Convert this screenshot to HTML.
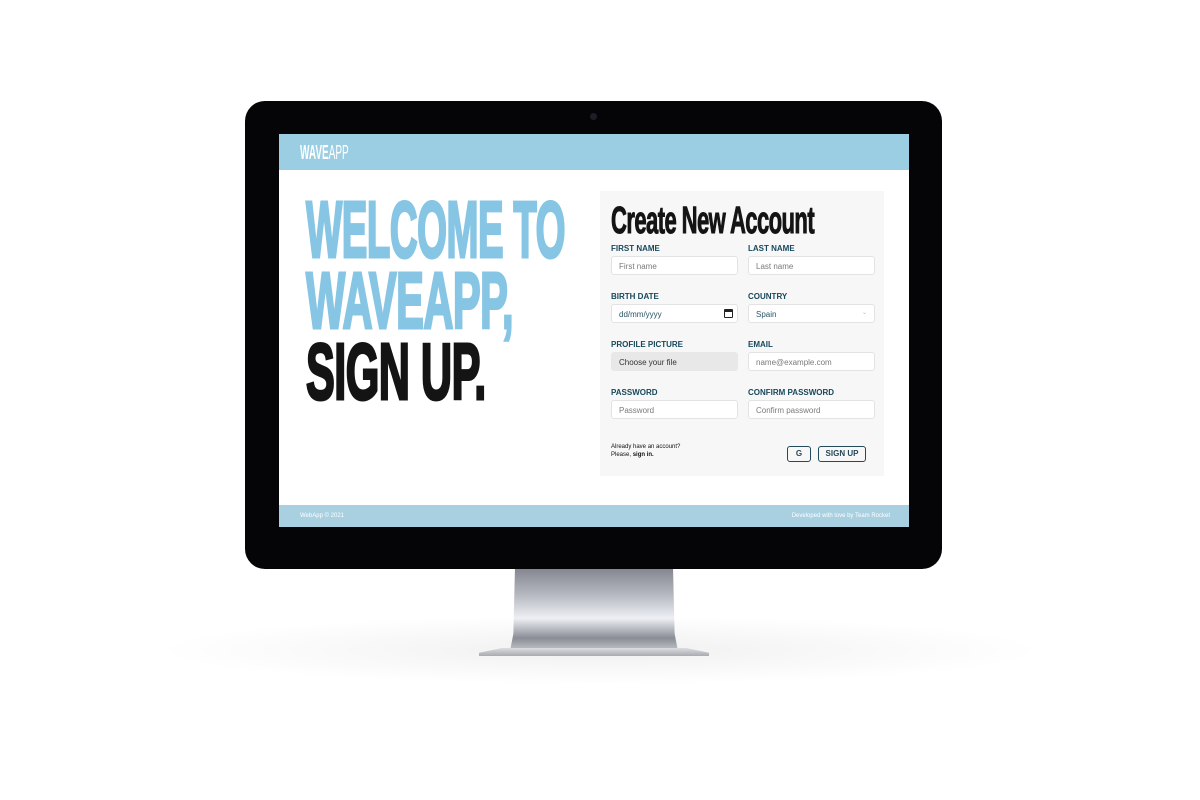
<!DOCTYPE html>
<html><head><meta charset="utf-8"><style>
*{margin:0;padding:0;box-sizing:border-box}
body{width:1200px;height:800px;background:#fff;position:relative;overflow:hidden;font-family:"Liberation Sans",sans-serif}
.abs{position:absolute}
.shadow{left:150px;top:615px;width:900px;height:70px;border-radius:50%;background:radial-gradient(ellipse at center,rgba(0,0,0,.06),rgba(0,0,0,0) 70%)}
.stand{left:510px;top:565px;width:168px;height:86px;background:linear-gradient(#7d8089 0%,#b6b9c1 35%,#eef0f5 62%,#8a8d96 85%,#c4c6cc 100%);clip-path:polygon(3% 0,97% 0,98% 80%,100% 100%,0 100%,2% 80%)}
.base{left:479px;top:648px;width:230px;height:8px;background:linear-gradient(#dcdde0,#a9abb0);clip-path:polygon(10% 0,90% 0,100% 60%,100% 100%,0 100%,0 60%)}
.bezel{left:245px;top:101px;width:697px;height:468px;background:#050507;border-radius:20px}
.cam{left:590px;top:113px;width:7px;height:7px;border-radius:50%;background:#1c1f2a}
.screen{left:279px;top:134px;width:630px;height:393px;background:#fff;overflow:hidden}
.hdr{left:0;top:0;width:630px;height:36px;background:#9bcde3}
.ftr{left:0;top:371px;width:630px;height:22px;background:#a8d0e0;color:#fff;font-size:6px}
.big{font-weight:bold;font-size:80px;line-height:1;transform-origin:0 0;white-space:nowrap;letter-spacing:-1px;-webkit-text-stroke:3px currentColor}
.panel{left:321px;top:57px;width:284px;height:285px;background:#f7f7f7}
.lbl{font-size:8px;font-weight:bold;color:#17485c}
.inp{width:127px;height:19px;background:#fff;border:1px solid #e3e3e3;border-radius:3px;font-size:8px;color:#7a7a7a;padding:5px 7px}
.btn{border:1px solid #23495a;border-radius:3px;font-size:8px;font-weight:bold;color:#23495a;text-align:center;line-height:14px;height:16px}
</style></head><body>
<div class="abs shadow"></div>
<div class="abs stand"></div>
<div class="abs base"></div>
<div class="abs bezel"></div>
<div class="abs cam"></div>
<div class="abs screen">
 <div class="abs hdr"><div class="abs" style="left:21px;top:8px;color:#fff;font-weight:bold;font-size:20px;transform:scaleX(.5);transform-origin:0 0;white-space:nowrap">WAVE<span style="font-weight:normal">APP</span></div></div>
 <div class="abs big" style="left:27px;top:56px;color:#86c5e3;transform:scaleX(.48)">WELCOME TO</div>
 <div class="abs big" style="left:27px;top:127px;color:#86c5e3;transform:scaleX(.52)">WAVEAPP,</div>
 <div class="abs big" style="left:27px;top:198px;color:#141414;transform:scaleX(.54)">SIGN UP.</div>
 <div class="abs panel">
  <div class="abs" style="left:11px;top:9px;font-size:38px;font-weight:bold;color:#141414;transform:scaleX(.58);transform-origin:0 0;white-space:nowrap;letter-spacing:-1px;-webkit-text-stroke:1px #141414">Create New Account</div>
  <div class="abs lbl" style="left:11px;top:53px">FIRST NAME</div>
  <div class="abs lbl" style="left:148px;top:53px">LAST NAME</div>
  <div class="abs inp" style="left:11px;top:65px">First name</div>
  <div class="abs inp" style="left:148px;top:65px">Last name</div>
  <div class="abs lbl" style="left:11px;top:101px">BIRTH DATE</div>
  <div class="abs lbl" style="left:148px;top:101px">COUNTRY</div>
  <div class="abs inp" style="left:11px;top:113px;color:#2b5566">dd/mm/yyyy<span style="position:absolute;right:4px;top:4px;width:9px;height:9px;border:1.5px solid #222;border-top-width:3px;border-radius:1px"></span></div>
  <div class="abs inp" style="left:148px;top:113px;color:#2b5566">Spain<span style="position:absolute;right:7px;top:4px;font-size:6px;color:#bbb">⌄</span></div>
  <div class="abs lbl" style="left:11px;top:149px">PROFILE PICTURE</div>
  <div class="abs lbl" style="left:148px;top:149px">EMAIL</div>
  <div class="abs inp" style="left:11px;top:161px;background:#e8e8e8;border-color:#e8e8e8;color:#333">Choose your file</div>
  <div class="abs inp" style="left:148px;top:161px">name@example.com</div>
  <div class="abs lbl" style="left:11px;top:197px">PASSWORD</div>
  <div class="abs lbl" style="left:148px;top:197px">CONFIRM PASSWORD</div>
  <div class="abs inp" style="left:11px;top:209px">Password</div>
  <div class="abs inp" style="left:148px;top:209px">Confirm password</div>
  <div class="abs" style="left:11px;top:252px;font-size:6px;color:#111;line-height:8px">Already have an account?<br>Please, <b>sign in.</b></div>
  <div class="abs btn" style="left:187px;top:255px;width:24px">G</div>
  <div class="abs btn" style="left:218px;top:255px;width:48px">SIGN UP</div>
 </div>
 <div class="abs ftr"><span class="abs" style="left:21px;top:8px">WebApp © 2021</span><span class="abs" style="right:19px;top:8px">Developed with love by Team Rocket</span></div>
</div>
</body></html>
